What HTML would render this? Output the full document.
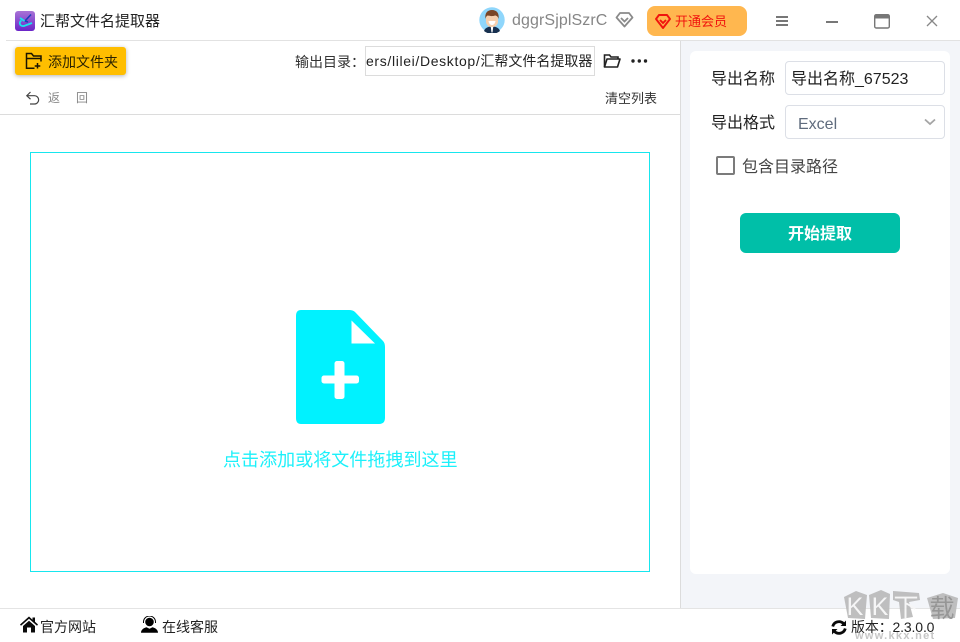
<!DOCTYPE html>
<html lang="zh"><head><meta charset="utf-8"><title>汇帮文件名提取器</title>
<style>
html,body{margin:0;padding:0}
body{width:960px;height:642px;position:relative;overflow:hidden;background:#fff;font-family:"Liberation Sans","Noto Sans CJK SC",sans-serif;color:#222}
.a{position:absolute;white-space:nowrap;line-height:20px}
svg{position:absolute;display:block}
</style></head><body>
<!-- title bar -->
<div class="a" style="left:15px;top:11px;width:20px;height:20px;border-radius:3px;background:linear-gradient(#a873d6,#6a25c8)"></div>
<svg style="left:15px;top:11px" width="20" height="20" viewBox="0 0 20 20" fill="none"><path d="M10 10 L16 3.500M10 10l3 1" stroke="#1d3fb8" stroke-width="1.600"/><path d="M5 7l4.500 3M6.500 9.500C3.500 11 4.500 15.500 9 15l8-3" stroke="#19e4ee" stroke-width="1.800"/></svg>
<div class="a" style="left:40px;top:12px;font-size:15px;color:#222">汇帮文件名提取器</div>
<svg style="left:479px;top:7px" width="26" height="26" viewBox="0 0 26 26"><circle cx="13" cy="13" r="12.700" fill="#8fd6fb"/><path d="M5 24c1-3 4-4.500 8-4.500s7 1.500 8 4.500a12.700 12.700 0 0 1-16 0z" fill="#17304f"/><path d="M11.700 19.500h2.600l-.8 6h-1z" fill="#fff"/><rect x="7" y="6" width="12" height="14" rx="5.500" fill="#f6cfae"/><path d="M6.500 12C5.500 6 8.500 3 13 3s7.500 3 6.500 9C19 9.500 17.500 8.500 16 8.500c-2 .8-5 .8-7 0-1 0-2 1-2.500 3.500z" fill="#7a4526"/><path d="M9.500 14h7c-.5 3-2 4-3.500 4s-3-1-3.500-4z" fill="#fff"/></svg>
<div class="a" style="left:512px;top:11px;font-size:16px;color:#868686;letter-spacing:.1px">dggrSjplSzrC</div>
<svg style="left:615px;top:11px" width="19" height="18" viewBox="0 0 19 18" fill="none" stroke="#8a8a8a" stroke-width="1.800"><path d="M5 2h9l3.500 4.500L9.500 15.500 1.500 6.500z" stroke-linejoin="round"/><path d="M6 7l3.500 3.500L13 7"/></svg>
<div class="a" style="left:647px;top:6px;width:100px;height:30px;background:#ffb74f;border-radius:8px"></div>
<svg style="left:655px;top:13px" width="16" height="17" viewBox="0 0 16 17" fill="none" stroke="#f0140e" stroke-width="1.900"><path d="M4 2h8l3 4-7 9-7-9z" stroke-linejoin="round"/><path d="M5 7l3 3 3-3"/></svg>
<div class="a" style="left:675px;top:12px;font-size:13px;color:#f0140e">开通会员</div>
<svg style="left:775px;top:15px" width="14" height="12" viewBox="0 0 14 12" fill="#777"><rect x="1" y="1" width="12" height="2"/><rect x="1" y="5" width="12" height="2"/><rect x="1" y="9" width="12" height="2"/></svg>
<div class="a" style="left:826px;top:21px;width:12px;height:2px;background:#777"></div>
<svg style="left:874px;top:14px" width="16" height="15" viewBox="0 0 16 15" fill="none"><rect x=".7" y=".7" width="14.600" height="13.300" rx="1.500" stroke="#777" stroke-width="1.400"/><rect x="1" y="1" width="14" height="3.500" fill="#777"/></svg>
<svg style="left:926px;top:15px" width="12" height="12" viewBox="0 0 12 12" stroke="#888" stroke-width="1.300"><path d="M1 1l10 10M11 1L1 11"/></svg>
<div class="a" style="left:6px;top:40px;width:954px;height:1px;background:#e2e2e2"></div>

<!-- toolbar -->
<div class="a" style="left:15px;top:47px;width:111px;height:28px;background:#ffbe00;border-radius:3px;box-shadow:0 1px 4px rgba(0,0,0,.3)"></div>
<svg style="left:25px;top:52px" width="18" height="18" viewBox="0 0 18 18" fill="none" stroke="#1a1400" stroke-width="1.500"><path d="M9.500 16.200H1.500V1.500h5l2 2.500h7.500v5.500"/><path d="M1.500 6.500h14.500"/><path d="M12.500 11v5.500M9.700 14h5.600"/></svg>
<div class="a" style="left:48px;top:52px;font-size:14px;color:#2c2300">添加文件夹</div>
<div class="a" style="left:295px;top:52px;font-size:14px;color:#333">输出目录：</div>
<div class="a" style="left:365px;top:46px;width:228px;height:28px;border:1px solid #dcdcdc;overflow:hidden">
<div style="position:absolute;left:0;top:4px;font-size:14px;line-height:20px;color:#222"><span style="letter-spacing:.65px">ers/lilei/Desktop/</span>汇帮文件名提取器</div></div>
<svg style="left:603px;top:53px" width="18" height="16" viewBox="0 0 18 16" fill="none" stroke="#222" stroke-width="1.600"><path d="M1.500 14V2h5l1.500 2h7v2"/><path d="M1.500 14h13L17 6H4z" stroke-linejoin="round"/></svg>
<svg style="left:630px;top:58px" width="18" height="6" viewBox="0 0 18 6" fill="#222"><circle cx="3" cy="3" r="1.700"/><circle cx="9.300" cy="3" r="1.700"/><circle cx="15.500" cy="3" r="1.700"/></svg>
<svg style="left:25px;top:90px" width="16" height="16" viewBox="0 0 16 16" fill="none" stroke="#444" stroke-width="1.200"><path d="M5.500 2 1.800 5.700l3.700 3.500"/><path d="M2 5.700h7.500a4 4 0 0 1 0 8.300H5"/></svg>
<div class="a" style="left:48px;top:88px;font-size:12px;color:#888">返</div>
<div class="a" style="left:76px;top:88px;font-size:12px;color:#888">回</div>
<div class="a" style="left:605px;top:89px;font-size:13px;color:#333">清空列表</div>
<div class="a" style="left:0;top:114px;width:680px;height:1px;background:#dcdcdc"></div>

<!-- drop zone -->
<div class="a" style="left:30px;top:152px;width:618px;height:418px;border:1px solid #17e6ee"></div>
<svg style="left:295px;top:310px" width="90" height="115" viewBox="0 0 90 115"><path d="M6 0H54Q58 0 60 2L88 31Q90 33 90 37V108Q90 114 84 114H6Q1 114 1 108V6Q1 0 6 0Z" fill="#00f2ff"/><path d="M56.500 10.500V33.500H80Z" fill="#fff"/><path d="M42 51h5a2.500 2.500 0 0 1 2.500 2.500V65.500H61.500A2.500 2.500 0 0 1 64 68v3a2.500 2.500 0 0 1-2.500 2.500H49.500V86.500A2.500 2.500 0 0 1 47 89h-5a2.500 2.500 0 0 1-2.500-2.500V73.500H29A2.500 2.500 0 0 1 26.500 71v-3A2.500 2.500 0 0 1 29 65.500H39.500V53.500A2.500 2.500 0 0 1 42 51z" fill="#fff"/></svg>
<div class="a" style="left:223px;top:450px;font-size:18px;color:#1cf0fa;letter-spacing:.05px">点击添加或将文件拖拽到这里</div>

<!-- right panel -->
<div class="a" style="left:680px;top:41px;width:280px;height:567px;background:#f3f5f9;box-shadow:inset 1px 0 0 #dcdcdc"></div>
<div class="a" style="left:690px;top:51px;width:260px;height:523px;background:#fff;border-radius:6px"></div>
<div class="a" style="left:711px;top:69px;font-size:16px;line-height:20px;color:#222;transform:translateY(1px)">导出名称</div>
<div class="a" style="left:785px;top:61px;width:158px;height:32px;border:1px solid #dcdfe6;border-radius:4px;background:#fff"></div>
<div class="a" style="left:791px;top:70px;font-size:16px;color:#222">导出名称_67523</div>
<div class="a" style="left:711px;top:114px;font-size:16px;color:#222">导出格式</div>
<div class="a" style="left:785px;top:105px;width:158px;height:32px;border:1px solid #dcdfe6;border-radius:4px;background:#fff"></div>
<div class="a" style="left:798px;top:115px;font-size:16px;color:#5f6b7d">Excel</div>
<svg style="left:924px;top:118px" width="12" height="8" viewBox="0 0 12 8" fill="none" stroke="#a5a5a5" stroke-width="1.800"><path d="M1 1.500l5 4.500 5-4.500"/></svg>
<div class="a" style="left:716px;top:156px;width:15px;height:15px;border:2px solid #7b7b7b;border-radius:2px;background:#fff"></div>
<div class="a" style="left:742px;top:158px;font-size:16px;color:#444">包含目录路径</div>
<div class="a" style="left:740px;top:213px;width:160px;height:40px;background:#00bfa8;border-radius:6px;color:#fff;font-size:16px;font-weight:bold;line-height:43px;text-align:center">开始提取</div>

<!-- footer -->
<div class="a" style="left:0;top:608px;width:960px;height:1px;background:#e4e4e4"></div>

<!-- watermark -->
<svg style="left:843px;top:588px" width="116" height="34" viewBox="0 0 116 34" fill="#b9b9b9" opacity=".9">
<path d="M1 9 13 3 24 7 22 31 5 30Z"/><path d="M26 7 38 2 47 6 46 31 28 30Z"/><path d="M50 3 76 5 77 12 66 14 70 29 58 31 56 14 50 12Z"/><path d="M84 10 100 5 115 10 112 30 90 31Z"/>
<text x="12" y="27" font-size="25" fill="#f6f6f6" text-anchor="middle" font-family="Liberation Sans">K</text>
<text x="37" y="27" font-size="25" fill="#f6f6f6" text-anchor="middle" font-family="Liberation Sans">K</text>
<text x="63" y="28" font-size="25" fill="#f6f6f6" text-anchor="middle" font-family="Noto Sans CJK SC">下</text>
<text x="99" y="29" font-size="25" fill="#8c8c8c" text-anchor="middle" font-family="Noto Sans CJK SC">载</text></svg>
<div class="a" style="left:855px;top:631px;font-size:11px;line-height:11px;font-weight:bold;color:#c6c6c6;letter-spacing:1.300px">www.kkx.net</div>

<svg style="left:20px;top:616px" width="18" height="17" viewBox="0 0 18 17" fill="#0a0a0a"><path d="M9 .500 0 8.500l1 1.200L9 2.700l8 7 1-1.200-3-2.700V1.500h-2.500v2.200z"/><path d="M3 10 9 4.700 15 10v6.500h-4v-5H7v5H3z"/></svg>
<div class="a" style="left:40px;top:617px;font-size:14px;color:#222">官方网站</div>
<svg style="left:141px;top:616px" width="17" height="17" viewBox="0 0 17 17"><circle cx="8.500" cy="6" r="4.300" fill="#000"/><path d="M2.500 7V6a6 6 0 0 1 12 0v1" fill="none" stroke="#000" stroke-width="1"/><path d="M0 16.800c0-3.500 3.500-5 5.500-5.500l3 1.500 3-1.500c2 .5 5.500 2 5.500 5.500z" fill="#000"/></svg>
<div class="a" style="left:162px;top:617px;font-size:14px;color:#222">在线客服</div>
<svg style="left:831px;top:620px" width="16" height="15" viewBox="0 0 16 15" fill="none" stroke="#0a0a0a" stroke-width="2.800"><path d="M1.700 6.500A6.500 6.500 0 0 1 12.500 3.500"/><path d="M14.300 8.500A6.500 6.500 0 0 1 3.500 11.500"/><path d="M15 .5v5.500H9.500zM1 14.500V9h5.500z" fill="#0a0a0a" stroke="none"/></svg>
<div class="a" style="left:851px;top:617px;font-size:14px;color:#222;letter-spacing:-.15px">版本：2.3.0.0</div>
</body></html>
